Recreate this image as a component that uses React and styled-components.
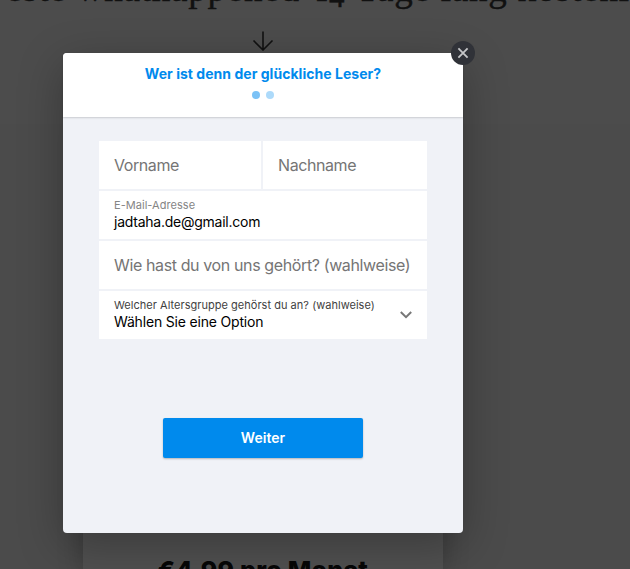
import React from "react";
import styled, { createGlobalStyle } from "styled-components";

const GlobalStyle = createGlobalStyle`
  * { box-sizing: border-box; }
  body { margin: 0; overflow: hidden; background: #4b4b4b; }
  button, input { font: inherit; border: 0; padding: 0; margin: 0; }
`;

const Screen = styled.div`
  position: relative;
  width: 630px;
  height: 569px;
  overflow: hidden;
  background: #4b4b4b;
  font-family: Inter, "Liberation Sans", sans-serif;
`;

const PageHeader = styled.header`
  height: 124px;
  display: flex;
  flex-direction: column;
  align-items: flex-start;
  background: #4c4c4c;
`;

const Headline = styled.h1`
  height: 40px;
  margin: -31px 0 0 6px;
  font: 400 37px/40px "Liberation Serif", serif;
  letter-spacing: 0.78px;
  -webkit-text-stroke: 0.4px #111;
  white-space: nowrap;
  color: #111;
`;

const OldStyleFigures = styled.span`
  display: inline-block;
  width: 32px;
  margin-left: 5px;
  line-height: 1;
  font-size: 27px;
`;

const LowFigure = styled.span`
  display: inline-block;
  font-size: 31px;
  line-height: 1;
  vertical-align: -6px;
`;

const DownArrow = styled.svg`
  display: block;
  margin: 22px 0 0 252px;
`;

const PageBody = styled.main`
  height: 445px;
  padding: 0 187px 0 83px;
  background: #4b4b4b;
`;

const PriceCard = styled.section`
  height: 445px;
  padding-top: 431px;
  background: #505050;
  box-shadow: 0 4px 24px rgba(0, 0, 0, 0.24);
`;

const Price = styled.h2`
  margin: 0;
  font: 800 25px/30px Inter, sans-serif;
  letter-spacing: 0.25px;
  text-align: center;
  white-space: nowrap;
  color: #070707;
`;

const Dialog = styled.section`
  position: absolute;
  left: 63px;
  top: 53px;
  width: 400px;
  height: 480px;
  border-radius: 4px;
  background: #f0f2f7;
  box-shadow: 0 12px 45px rgba(0, 0, 0, 0.28);
`;

const DialogHeader = styled.header`
  height: 64px;
  padding-top: 12px;
  display: flex;
  flex-direction: column;
  align-items: center;
  border-radius: 4px 4px 0 0;
  background: #fff;
  box-shadow: 0 1px 2px rgba(0, 0, 0, 0.16);
`;

const Title = styled.h3`
  margin: 0;
  font-size: 14px;
  line-height: 18px;
  font-weight: 700;
  letter-spacing: 0.03px;
  white-space: nowrap;
  color: #008aed;
`;

const Steps = styled.div`
  display: flex;
  gap: 6px;
  margin-top: 8px;
`;

const Step = styled.span`
  width: 8px;
  height: 8px;
  border-radius: 50%;
  background: ${(p) => (p.$active ? "#7bc2f6" : "#addafa")};
`;

const CloseButton = styled.button`
  position: absolute;
  top: -12px;
  right: -12px;
  width: 24px;
  height: 24px;
  display: grid;
  place-items: center;
  border-radius: 50%;
  background: #303238;
`;

const Form = styled.form`
  display: flex;
  flex-direction: column;
  align-items: center;
`;

const Fields = styled.div`
  width: 328px;
  margin-top: 24px;
  display: grid;
  grid-template-columns: 162px 164px;
  grid-auto-rows: 48px;
  gap: 2px;
`;

const Field = styled.label`
  display: flex;
  flex-direction: column;
  justify-content: center;
  padding: 0 15px;
  grid-column: ${(p) => (p.$wide ? "1 / -1" : "auto")};
  background: #fff;
  white-space: nowrap;
`;

const SelectField = styled(Field)`
  flex-direction: row;
  align-items: center;
  justify-content: space-between;
`;

const Placeholder = styled.span`
  font-size: 16px;
  line-height: 20px;
  letter-spacing: ${(p) => p.$track}px;
  color: #757575;
`;

const Caption = styled.span`
  display: block;
  margin-top: -3px;
  font-size: 11px;
  line-height: 16px;
  letter-spacing: ${(p) => p.$track}px;
  color: ${(p) => (p.$dark ? "#3f3f3f" : "#858585")};
`;

const Value = styled.span`
  display: block;
  font-size: 14px;
  line-height: 18px;
  letter-spacing: ${(p) => p.$track}px;
  color: #000;
`;

const SubmitButton = styled.button`
  width: 200px;
  height: 40px;
  margin-top: 79px;
  padding-bottom: 2px;
  border-radius: 2px;
  background: #008aed;
  color: #fff;
  box-shadow: 0 1px 2px rgba(0, 0, 0, 0.25);
`;

const SubmitLabel = styled.span`
  font-size: 14px;
  line-height: 20px;
  font-weight: 600;
  letter-spacing: 0.05px;
`;

export default function App() {
  return (
    <Screen>
      <GlobalStyle />
      <PageHeader>
        <Headline>
          este whathappened <OldStyleFigures>1<LowFigure>4</LowFigure></OldStyleFigures> Tage lang kostenlos
        </Headline>
        <DownArrow width="22" height="20" viewBox="0 0 22 20" fill="none" stroke="#111" strokeWidth="1.6">
          <path d="M11 0.5V18.5M1.5 9.5L11 19L20.5 9.5" />
        </DownArrow>
      </PageHeader>
      <PageBody>
        <PriceCard>
          <Price>€4,99 pro Monat</Price>
        </PriceCard>
      </PageBody>
      <Dialog role="dialog">
        <DialogHeader>
          <Title>Wer ist denn der glückliche Leser?</Title>
          <Steps>
            <Step $active />
            <Step />
          </Steps>
        </DialogHeader>
        <CloseButton aria-label="Schließen">
          <svg width="12" height="12" viewBox="0 0 12 12" stroke="#c5c6c8" strokeWidth="1.8">
            <path d="M1.4 1.4L10.6 10.6M10.6 1.4L1.4 10.6" />
          </svg>
        </CloseButton>
        <Form>
          <Fields>
            <Field><Placeholder $track={-0.42}>Vorname</Placeholder></Field>
            <Field><Placeholder $track={-0.42}>Nachname</Placeholder></Field>
            <Field $wide>
              <Caption $track={0.04}>E-Mail-Adresse</Caption>
              <Value $track={-0.25}>jadtaha.de@gmail.com</Value>
            </Field>
            <Field $wide><Placeholder $track={-0.38}>Wie hast du von uns gehört? (wahlweise)</Placeholder></Field>
            <SelectField $wide>
              <span>
                <Caption $dark $track={0.03}>Welcher Altersgruppe gehörst du an? (wahlweise)</Caption>
                <Value $track={-0.18}>Wählen Sie eine Option</Value>
              </span>
              <svg width="12" height="8" viewBox="0 0 12 8" fill="none" stroke="#777" strokeWidth="2">
                <path d="M0.8 1L6 6.2L11.2 1" />
              </svg>
            </SelectField>
          </Fields>
          <SubmitButton type="button"><SubmitLabel>Weiter</SubmitLabel></SubmitButton>
        </Form>
      </Dialog>
    </Screen>
  );
}
